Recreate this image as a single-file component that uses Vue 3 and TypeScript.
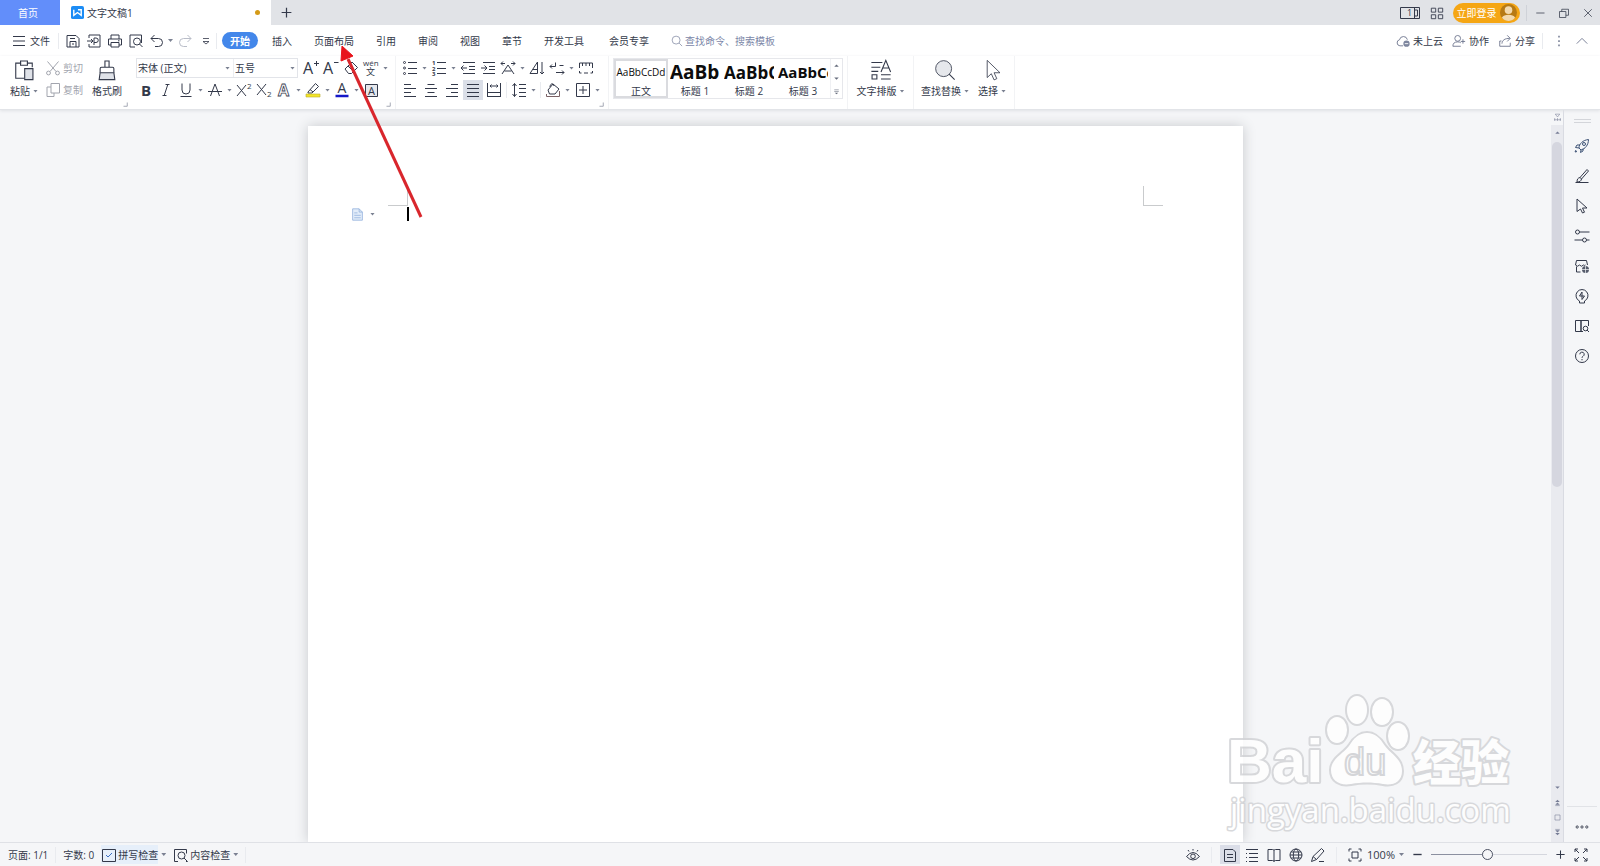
<script setup lang="ts">
import { h, ref } from 'vue'

interface Tool {
  icon: string
  label: string
  caret?: boolean
  active?: boolean
  sep?: boolean
}

const icons: Record<string, string> = {
  menu: '<path d="M2 3.500h12M2 8h12M2 12.500h12"/>',
  save: '<path d="M2 14V2.500H11L14 5.500V14H2zM5 14V8.500h6V14M5 5.500h5M7 11h2"/>',
  exportPdf: '<path d="M3 5V2h11v12H3v-3M1 8h6M5 6l2 2-2 2M8 12V5h2a2 2 0 0 1 0 4.500H8"/>',
  print: '<path d="M4 6V2h8v4M4 12H1.500V6h13v6H12M4 9.500h8V14H4zM11 7.800h1.500"/>',
  preview: '<path d="M7 14H2V2h11.500v8M13.500 2v3"/><circle cx="9" cy="8.500" r="3.500"/><path d="M11.500 11l3 3"/>',
  undo: '<path d="M5.500 2L2 5.500 5.500 9M2 5.500h7.500a4 4 0 0 1 0 8H6"/>',
  redo: '<path d="M10.500 2L14 5.500 10.500 9M14 5.500H6.500a4 4 0 0 0 0 8H10"/>',
  more: '<path d="M5 5.500h6M5 8.500h6L8 11z" stroke-width=".8"/>',
  search: '<circle cx="6.800" cy="6.800" r="5.300"/><path d="M10.800 10.800l4 4"/>',
  cloud: '<path d="M8 13.500H4.500A3.500 3.500 0 0 1 4 6.600 4.600 4.600 0 0 1 13 6.500"/><circle cx="12" cy="11" r="3.600" fill="#7d869e" stroke="none"/><path d="M10 11h4" stroke="#fff"/>',
  people: '<circle cx="6.500" cy="5" r="3.300"/><path d="M1 14c0-3.500 2-5 5.500-5 1.500 0 2.500.2 3.500 1M1 14h9M12.500 6v5M10 8.500h5"/>',
  share: '<path d="M4 8H2v6h12v-4M4.500 11C5 7 7.500 5 13.500 5M10.500 1.500L14 5l-3.500 3.500"/>',
  dots: '<path d="M8 2v2M8 7v2M8 12v2" stroke-width="1.600"/>',
  up: '<path d="M2 11l6-6 6 6"/>',
  tile: '<path d="M1.500 2.500h5v4.500h-5zM9.500 2.500h5v4.500h-5zM1.500 10h5v4.500h-5zM9.500 10h5v4.500h-5z"/>',
  min: '<path d="M3 8h11"/>',
  restore: '<path d="M2 6h8.500v8H2zM5 6V3h9v8h-3.500"/>',
  close: '<path d="M3 3l10 10M13 3L3 13"/>',
  plus: '<path d="M8 2v12M2 8h12" stroke-width="1.500"/>',
  minus: '<path d="M2 8h12" stroke-width="2"/>',
  paste: '<path d="M6 3H2v11h6M10 3h4v3M5.500 1.500h5v3h-5z" stroke-width=".8"/><path d="M8.500 7h6v8h-6z" fill="#dfe2e8" stroke-width=".8"/>',
  cut: '<path d="M2.500 1.500l8.500 10M13.500 1.500L5 11.500"/><circle cx="3.500" cy="13" r="1.900"/><circle cx="12.500" cy="13" r="1.900"/>',
  copy: '<path d="M6 1.500h8.500V11H6zM6 5H2v9.500h7V11"/>',
  brush: '<path d="M6.500 6V1.500h3V6M3 10V7q0-1 1-1h8q1 0 1 1v3" stroke-width=".8"/><path d="M3 10h10l.7 5H2.300z" fill="#dfe2e8" stroke-width=".8"/>',
  grow: '<text x="0" y="14" font-size="16">A</text><path d="M11 3.500h5M13.500 1v5"/>',
  shrink: '<text x="0" y="14" font-size="16">A</text><path d="M11 2.500h4.500"/>',
  eraser: '<path d="M2 9l7-7 5.500 5.500L8.500 13.500h-3zM5 6l5.500 5.500"/>',
  pinyin: '<text x="0" y="6" font-size="8">wén</text><text x="3" y="15" font-size="9">文</text>',
  bold: '<text x="3" y="13.500" font-size="15" font-weight="700">B</text>',
  italic: '<path d="M7.500 2.500h4M4.500 13.500h4M9.800 2.500l-3.600 11"/>',
  underline: '<path d="M4 1.500v6.500a4 4 0 0 0 8 0V1.500M2.500 14.500h11"/>',
  strike: '<path d="M3.500 14L8 2l4.500 12M1 9.500h14"/>',
  sup: '<path d="M1 3l9 11M10 3L1 14"/><text x="11" y="7" font-size="8">2</text>',
  sub: '<path d="M1 2l9 11M10 2L1 13"/><text x="11" y="15" font-size="8">2</text>',
  effect: '<text x="2" y="14" font-size="16" font-weight="700" fill="#fff" stroke="#3f4556" stroke-width=".8">A</text>',
  marker: '<path d="M3 10l7.500-8.500 3 3L7 11H3zM5 7.500L8 10"/><path d="M1 12h14v3H1z" fill="#f4e52a" stroke="#b9ad2c" stroke-width=".6"/>',
  color: '<text x="3.500" y="11" font-size="14">A</text><path d="M1.500 14h13" stroke="#1618c8" stroke-width="2.500"/>',
  shade: '<path d="M2.500 2.500h12v12h-12z" fill="#e6e8ed"/><text x="5" y="12.500" font-size="11">A</text>',
  bullets: '<circle cx="2.500" cy="2.500" r="1"/><circle cx="2.500" cy="8" r="1"/><circle cx="2.500" cy="13.500" r="1"/><path d="M6 2.500h9M6 8.500h9M6 13.500h9"/>',
  numbers: '<text x="1" y="5" font-size="6" font-weight="700">1</text><text x="1" y="10.500" font-size="6" font-weight="700">2</text><text x="1" y="16" font-size="6" font-weight="700">3</text><path d="M6 2.500h9M6 8.500h9M6 13.500h9"/>',
  outdent: '<path d="M3 2.500h12M9 6.500h6M9 9.500h6M3 13.500h12M1 8h6M3.500 5.500L1 8l2.500 2.500"/>',
  indent: '<path d="M3 2.500h12M9 6.500h6M9 9.500h6M3 13.500h12M1 8h6M4.500 5.500L7 8l-2.500 2.500"/>',
  scale: '<path d="M1 3.500h4M3 1.500L1 3.500l2 2M15 3.500h-4M13 1.500l2 2-2 2M2 14l6-9 6 9M4.500 11h7"/>',
  sort: '<path d="M1 13.500L8.500 2v11.500zM4 9.500h4.500M13 2v12M11 12l2 2 2-2"/>',
  wrap: '<path d="M6.500 2.500v4H1M3 4.500l-2 2 2 2M7 12.500h8M13 10.500l2 2-2 2M14.500 5.500h-4"/>',
  ruler: '<path d="M1.500 8V3h13v5M4.500 3v3M8 3v3M11.500 3v3M1.500 11v2h2M6 13h4M12.500 13h2v-2"/>',
  left: '<path d="M2 2.500h7M2 6.500h12M2 10.500h7M2 14.500h12"/>',
  center: '<path d="M4.500 2.500h7M2 6.500h12M4.500 10.500h7M2 14.500h12"/>',
  right: '<path d="M7 2.500h7M2 6.500h12M7 10.500h7M2 14.500h12"/>',
  justify: '<path d="M2 2.500h12M2 6.500h12M2 10.500h12M2 14.500h12"/>',
  distribute: '<path d="M1.500 1v14M14.500 1v14M4 4h8M5.500 2.500L4 4l1.500 1.500M10.500 2.500L12 4l-1.500 1.500M1.500 10.500h13M1.500 14.500h13"/>',
  spacing: '<path d="M3.500 1.500v13M1.500 4l2-2.500 2 2.500M1.500 12l2 2.500 2-2.500M8 2.500h7M8 6.500h7M8 10.500h7M8 14.500h7"/>',
  fill: '<path d="M3 8l5-6 6 5-4 5H4.500zM5 5c0-3 3-5 4-1"/><path d="M1.500 12v2.500h13V9" stroke="#7b6266"/>',
  border: '<path d="M1.500 1.500h13v13h-13zM8 4v8M4 8h8" />',
  typeset: '<path d="M1 2.500h8M1 6h6.500M1 9h5M1.500 11.500h3.500v3H1.500zM8 11.500h7M8 14.500h7" stroke-width=".8"/><path d="M8 9.500L11.500 1 15 9.500M9.500 6.500h4" stroke-width=".8"/>',
  find: '<circle cx="7" cy="7" r="5.800" fill="#e6e8ec" stroke-width=".6"/><path d="M11 11l4 4" stroke-width=".8"/>',
  select: '<path d="M4.500 1v12.500l3-2.800 2 4.500 2-.9-2-4.300h4.300z" stroke-width=".6"/>',
  launcher: '<path d="M14 4v10H4"/>',
  rocket: '<path d="M5 10c0-4 4-8 9.500-8.500C14.500 7 11 11 7 12zM6 7H3L1.500 9.500 5 10M9 10.500V13l-2.500 1.500L7 12M2 12l-1 2 2-.5" stroke="#3d5275"/><circle cx="10" cy="6" r="1.500" stroke="#3d5275"/>',
  pen: '<path d="M1.500 14.500h13M3 14c0-3 1-4 3-4.500l7-8 1.500 1.500-7 8C7 13 6 14 3 14zM6 9.500l1.800 1.700"/>',
  cursor: '<path d="M3 1v12.500l3.500-2.500 2 4 2-.8-2-4.200H13z"/>',
  sliders: '<circle cx="3.500" cy="4" r="2"/><path d="M5.500 4H15.500M.500 12h8M12.500 12h3"/><circle cx="10.500" cy="12" r="2"/>',
  shop: '<path d="M1.500 7L2.500 2.500h10l1 4.500M1.500 7q2 2.500 4 0 2 2.500 4 0 1 .8 2 0M2.500 8.500v5.500h4"/><circle cx="11.500" cy="11.500" r="3.500" fill="#565c6c" stroke="none"/><path d="M11.500 8v7M8 11.500h7" stroke="#f5f6f8" stroke-width=".7"/>',
  bulb: '<path d="M5.500 13v2h5v-2a6 6 0 1 0-5 0zM8 4L5.500 8H8v3.500L10.500 8H8z"/>',
  book: '<path d="M7 13.500H1.500v-11H7zM7 13.500V2.500H14.500V8M7 13.500h2"/><circle cx="11.500" cy="10.500" r="2.300"/><path d="M13 12l2 2"/>',
  help: '<circle cx="8" cy="8" r="6.500"/><path d="M5.800 6.300a2.200 2.200 0 1 1 3.200 2q-1 .5-1 1.500M8 11v1.300"/>',
  ellipsis: '<circle cx="2.500" cy="8" r="1.300"/><circle cx="8" cy="8" r="1.300"/><circle cx="13.500" cy="8" r="1.300"/>',
  spell: '<path d="M1.500 2.500h13v12h-13z"/><path d="M5 8l2 2 4-4" stroke="#3d6fc4"/>',
  content: '<path d="M5 14.500H1.500v-12h12v4M13 14.500h1.500"/><circle cx="8.500" cy="8.500" r="3.500"/><path d="M11 11l3.500 3.500"/>',
  eye: '<path d="M1.500 9.500Q8 1.500 14.500 9.500 8 16.500 1.500 9.500zM8 3.500V2M4 4.500L3 3M12 4.500L13 3"/><circle cx="8" cy="9.300" r="2.300"/>',
  page: '<path d="M2.500 2.500h8.500L13.500 5v9.500h-11zM5 7.500h6M5 10.500h6"/>',
  outline: '<path d="M2 2.500h12M5 6.500h9M2 6.500h1M2 10.500h1M5 10.500h9M5 14.500h9M2 14.500h1"/>',
  read: '<path d="M8 3.500V14.500M8 3.500Q8 2.500 6.500 2.500H2v11H6.500Q8 13.500 8 14.500 8 13.500 9.500 13.500H14v-11H9.500Q8 2.500 8 3.500z"/>',
  globe: '<circle cx="8" cy="8" r="6"/><ellipse cx="8" cy="8" rx="2.700" ry="6"/><path d="M2 8h12M3 5h10M3 11h10"/>',
  write: '<path d="M1.500 14.500l1.500-5L11.500 1.500 14 4 6.500 12.500zM9 14.500h5M3 9.500l3.500 3"/>',
  fit: '<path d="M2 4.500v-2.500h2.500M11.500 2H14v2.500M14 11.500V14h-2.500M4.500 14H2v-2.500M5 5h6v6H5z"/>',
  full: '<path d="M2 5V2h3M2 2l4 4M11 2h3v3M14 2l-4 4M14 11v3h-3M14 14l-4-4M5 14H2v-3M2 14l4-4"/>',
  doc: '<path d="M2 1h8l4 4v10H2z" fill="#e2ecf9"/><path d="M10 1v4h4M4 6h4M4 9h8M4 12h8"/>',
  arrowUp: '<path d="M4 10l4-4 4 4z" fill="currentColor" stroke="none"/>',
  arrowDown: '<path d="M4 6l4 4 4-4z" fill="currentColor" stroke="none"/>',
  prev: '<path d="M4 7l4-4 4 4zM4 12l4-4 4 4z" fill="currentColor" stroke="none"/><path d="M4 13.500h8"/>',
  next: '<path d="M4 4l4 4 4-4zM4 9l4 4 4-4z" fill="currentColor" stroke="none"/><path d="M4 2.500h8"/>',
  box: '<path d="M3.500 3.500h9v9h-9z"/>',
  rulerToggle: '<path d="M4 2h8L8 7zM2 12h12M3 9v5M8 9v5M13 9v5"/>',
  styleMore: '<path d="M4 5h8M4 8h8"/><path d="M5 10l3 3 3-3z" fill="currentColor" stroke="none"/>',
}

const Icon = (props: { name: string }) =>
  h('svg', { class: 'icon', viewBox: '0 0 16 16', 'aria-hidden': 'true', innerHTML: icons[props.name] })
Icon.props = ['name']

const quick: Tool[] = [
  { icon: 'save', label: '保存' },
  { icon: 'exportPdf', label: '输出为PDF' },
  { icon: 'print', label: '打印' },
  { icon: 'preview', label: '打印预览' },
  { icon: 'undo', label: '撤销', caret: true },
]
const tabs = ['开始', '插入', '页面布局', '引用', '审阅', '视图', '章节', '开发工具', '会员专享']
const activeTab = ref('开始')

const fontTop: Tool[] = [
  { icon: 'grow', label: '增大字号' },
  { icon: 'shrink', label: '减小字号' },
  { icon: 'eraser', label: '清除格式' },
  { icon: 'pinyin', label: '拼音指南', caret: true },
]
const fontBottom: Tool[] = [
  { icon: 'bold', label: '加粗' },
  { icon: 'italic', label: '倾斜' },
  { icon: 'underline', label: '下划线', caret: true },
  { icon: 'strike', label: '删除线', caret: true },
  { icon: 'sup', label: '上标' },
  { icon: 'sub', label: '下标' },
  { icon: 'effect', label: '文字效果', caret: true },
  { icon: 'marker', label: '突出显示', caret: true },
  { icon: 'color', label: '字体颜色', caret: true },
  { icon: 'shade', label: '字符底纹' },
]
const paraTop: Tool[] = [
  { icon: 'bullets', label: '项目符号', caret: true },
  { icon: 'numbers', label: '编号', caret: true },
  { icon: 'outdent', label: '减少缩进量' },
  { icon: 'indent', label: '增加缩进量' },
  { icon: 'scale', label: '中文版式', caret: true },
  { icon: 'sort', label: '排序' },
  { icon: 'wrap', label: '显示编辑标记', caret: true },
  { icon: 'ruler', label: '制表位' },
]
const paraBottom: Tool[] = [
  { icon: 'left', label: '左对齐' },
  { icon: 'center', label: '居中对齐' },
  { icon: 'right', label: '右对齐' },
  { icon: 'justify', label: '两端对齐', active: true },
  { icon: 'distribute', label: '分散对齐' },
  { icon: 'spacing', label: '行距', caret: true, sep: true },
  { icon: 'fill', label: '底纹颜色', caret: true, sep: true },
  { icon: 'border', label: '边框', caret: true },
]
const styles = [
  { sample: 'AaBbCcDd', name: '正文', kind: 'body' },
  { sample: 'AaBb', name: '标题 1', kind: 'h1' },
  { sample: 'AaBbC', name: '标题 2', kind: 'h2' },
  { sample: 'AaBbCc', name: '标题 3', kind: 'h3' },
]
const sideTools: Tool[] = [
  { icon: 'rocket', label: '快速工具' },
  { icon: 'pen', label: '样式' },
  { icon: 'cursor', label: '选择' },
  { icon: 'sliders', label: '属性' },
  { icon: 'shop', label: '素材' },
  { icon: 'bulb', label: '推荐' },
  { icon: 'book', label: '查阅' },
  { icon: 'help', label: '帮助' },
]
const views: Tool[] = [
  { icon: 'page', label: '页面视图', active: true },
  { icon: 'outline', label: '大纲' },
  { icon: 'read', label: '阅读版式' },
  { icon: 'globe', label: 'Web版式' },
  { icon: 'write', label: '写作模式' },
]
const zoom = ref(49)
</script>

<template>
  <div class="app">
    <header class="titlebar">
      <button class="home-tab">首页</button>
      <button class="doc-tab">
        <svg class="logo" viewBox="0 0 14 14" aria-hidden="true">
          <rect width="14" height="14" rx="2" fill="#1c8cf5" />
          <path d="M3 4v6l4-3 4 3V4H7.500" fill="none" stroke="#fff" stroke-width="1.500" />
        </svg>
        <span>文字文稿1</span>
        <i class="unsaved"></i>
      </button>
      <button class="new-tab" aria-label="新建"><Icon name="plus" /></button>
      <div class="window-tools">
        <button class="split" aria-label="窗口布局">
          <svg viewBox="0 0 20 12" aria-hidden="true">
            <path d="M.500 .500h19v11H.500zM14.500 .500v11M14.500 3h3v6h-3" fill="none" stroke="currentColor" />
            <text x="7" y="9" font-size="9" fill="currentColor">1</text>
          </svg>
        </button>
        <button class="tile" aria-label="应用"><Icon name="tile" /></button>
        <button class="login">
          <span>立即登录</span>
          <svg viewBox="0 0 18 18" aria-hidden="true">
            <circle cx="9" cy="9" r="9" fill="#b77a14" />
            <circle cx="9" cy="6.500" r="4" fill="#f3d9ac" />
            <path d="M2 14.500Q4 11.500 9 11.500t7 3Q13 18 9 18t-7-3.500z" fill="#f3d9ac" />
          </svg>
        </button>
        <i class="bar"></i>
        <button aria-label="最小化"><Icon name="min" /></button>
        <button aria-label="还原"><Icon name="restore" /></button>
        <button aria-label="关闭"><Icon name="close" /></button>
      </div>
    </header>

    <nav class="menubar">
      <button class="file"><Icon name="menu" />文件</button>
      <i class="bar"></i>
      <div class="quick">
        <button v-for="t in quick" :key="t.icon" class="tool" :aria-label="t.label">
          <span class="cell"><Icon :name="t.icon" /></span><i v-if="t.caret" class="caret"></i>
        </button>
        <button class="tool faded" aria-label="恢复"><span class="cell"><Icon name="redo" /></span></button>
        <button class="tool" aria-label="自定义"><span class="cell"><Icon name="more" /></span></button>
      </div>
      <i class="bar"></i>
      <div class="tabs">
        <button
          v-for="t in tabs"
          :key="t"
          :class="['tab', { on: t === activeTab }]"
          @click="activeTab = t"
        >{{ t }}</button>
      </div>
      <label class="search">
        <Icon name="search" />
        <input type="text" placeholder="查找命令、搜索模板" aria-label="查找命令、搜索模板" />
      </label>
      <div class="account">
        <button><Icon name="cloud" />未上云</button>
        <button><Icon name="people" />协作</button>
        <button><Icon name="share" />分享</button>
        <i class="bar"></i>
        <button aria-label="更多"><Icon name="dots" /></button>
        <button aria-label="收起功能区"><Icon name="up" /></button>
      </div>
    </nav>

    <section class="ribbon">
      <div class="group clip">
        <button class="big"><Icon name="paste" /><span>粘贴<i class="caret"></i></span></button>
        <div class="rows">
          <button class="small"><Icon name="cut" />剪切</button>
          <button class="small"><Icon name="copy" />复制</button>
        </div>
        <button class="big"><Icon name="brush" /><span>格式刷</span></button>
        <button class="launch" aria-label="剪贴板"><Icon name="launcher" /></button>
      </div>

      <div class="group font">
        <div class="rows">
          <div class="row">
            <div class="pickers">
              <span class="picker family">
                <select aria-label="字体"><option>宋体 (正文)</option></select><i class="caret"></i>
              </span>
              <span class="picker size">
                <select aria-label="字号"><option>五号</option></select><i class="caret"></i>
              </span>
            </div>
            <button v-for="t in fontTop" :key="t.icon" class="tool" :aria-label="t.label">
              <span class="cell"><Icon :name="t.icon" /></span><i v-if="t.caret" class="caret"></i>
            </button>
          </div>
          <div class="row">
            <button v-for="t in fontBottom" :key="t.icon" class="tool" :aria-label="t.label">
              <span class="cell"><Icon :name="t.icon" /></span><i v-if="t.caret" class="caret"></i>
            </button>
          </div>
        </div>
        <button class="launch" aria-label="字体设置"><Icon name="launcher" /></button>
      </div>

      <div class="group para">
        <div class="rows">
          <div class="row">
            <button v-for="t in paraTop" :key="t.icon" class="tool" :aria-label="t.label">
              <span class="cell"><Icon :name="t.icon" /></span><i v-if="t.caret" class="caret"></i>
            </button>
          </div>
          <div class="row">
            <template v-for="t in paraBottom" :key="t.icon">
              <i v-if="t.sep" class="bar"></i>
              <button :class="['tool', { active: t.active }]" :aria-label="t.label">
                <span class="cell"><Icon :name="t.icon" /></span><i v-if="t.caret" class="caret"></i>
              </button>
            </template>
          </div>
        </div>
        <button class="launch" aria-label="段落设置"><Icon name="launcher" /></button>
      </div>

      <div class="group">
        <div class="gallery">
          <button v-for="s in styles" :key="s.name" :class="['style', s.kind]">
            <span class="sample">{{ s.sample }}</span>
            <span class="name">{{ s.name }}</span>
          </button>
          <div class="scroller">
            <button aria-label="上一行"><Icon name="arrowUp" /></button>
            <button aria-label="下一行"><Icon name="arrowDown" /></button>
            <button aria-label="更多样式"><Icon name="styleMore" /></button>
          </div>
        </div>
      </div>

      <div class="group layout">
        <button class="big"><Icon name="typeset" /><span>文字排版<i class="caret"></i></span></button>
      </div>
      <div class="group edit">
        <button class="big"><Icon name="find" /><span>查找替换<i class="caret"></i></span></button>
        <button class="big"><Icon name="select" /><span>选择<i class="caret"></i></span></button>
      </div>
    </section>

    <main class="work">
      <div class="canvas">
        <article class="page">
          <div class="marks"><i class="mark start"></i><i class="mark end"></i></div>
          <div class="line">
            <button class="paper" aria-label="页面选项"><Icon name="doc" /><i class="caret"></i></button>
            <span class="cursor"></span>
          </div>
        </article>
      </div>
      <div class="scrollbar">
        <button class="ruler-toggle" aria-label="标尺"><Icon name="rulerToggle" /></button>
        <button aria-label="向上滚动"><Icon name="arrowUp" /></button>
        <div class="track"><div class="thumb"></div></div>
        <button aria-label="向下滚动"><Icon name="arrowDown" /></button>
        <button aria-label="上一页"><Icon name="prev" /></button>
        <button aria-label="选择浏览对象"><Icon name="box" /></button>
        <button aria-label="下一页"><Icon name="next" /></button>
      </div>
      <aside class="side">
        <i class="grip"></i>
        <button v-for="t in sideTools" :key="t.icon" :aria-label="t.label"><Icon :name="t.icon" /></button>
        <button class="last" aria-label="更多工具"><Icon name="ellipsis" /></button>
      </aside>

      <svg class="watermark" viewBox="0 0 300 146" aria-hidden="true">
        <g fill="#fff" stroke="#d2d3d6" stroke-width="4" paint-order="stroke" stroke-linejoin="round">
          <text x="3" y="89" font-size="62" font-weight="700" class="brand">Bai</text>
          <ellipse cx="113" cy="37" rx="10" ry="13" />
          <ellipse cx="133" cy="17" rx="10" ry="14" />
          <ellipse cx="158" cy="19" rx="10" ry="13" />
          <ellipse cx="174" cy="43" rx="10" ry="13" />
          <path d="M143 40C151 40 156 45 161 53 167 61 178 66 178 78 178 89 169 93 159 91 148 89 138 89 127 91 116 93 107 88 107 77 107 66 119 61 125 53 130 45 135 40 143 40z" />
          <text x="189" y="87" font-size="48" font-weight="900" class="cn">经验</text>
          <text x="6" y="129" font-size="33" class="url" stroke-width="3">jingyan.baidu.com</text>
        </g>
        <text x="120" y="82" font-size="38" class="brand" fill="#fff" stroke="#cfd0d3" stroke-width="2">du</text>
      </svg>
    </main>

    <footer class="status">
      <span class="count">页面: 1/1</span>
      <i class="bar"></i>
      <span class="count">字数: 0</span>
      <button class="check on"><Icon name="spell" />拼写检查</button><i class="caret"></i>
      <button class="check"><Icon name="content" />内容检查</button><i class="caret"></i>
      <i class="bar"></i>
      <div class="view-tools">
        <button class="view" aria-label="护眼模式"><Icon name="eye" /></button>
        <i class="bar wide"></i>
        <button v-for="t in views" :key="t.icon" :class="['view', { active: t.active }]" :aria-label="t.label">
          <Icon :name="t.icon" />
        </button>
        <i class="bar wide"></i>
        <button class="view" aria-label="最佳显示比例"><Icon name="fit" /></button>
        <button class="percent">100%<i class="caret"></i></button>
        <button class="step" aria-label="缩小"><Icon name="minus" /></button>
        <input v-model="zoom" class="zoom" type="range" min="0" max="100" aria-label="显示比例" />
        <button class="step" aria-label="放大"><Icon name="plus" /></button>
        <button class="view" aria-label="全屏"><Icon name="full" /></button>
      </div>
    </footer>

    <svg class="pointer" viewBox="0 0 90 180" aria-hidden="true">
      <path d="M86 173L13 15" stroke="#d9262c" stroke-width="3" />
      <path d="M7 2L6 17 18 12z" fill="#e8141c" stroke="#e8141c" />
    </svg>
  </div>
</template>

<style>
body {
  margin: 0;
}
</style>

<style scoped>
.app {
  position: relative;
  display: flex;
  flex-direction: column;
  height: 100vh;
  overflow: hidden;
  background: #f5f6f8;
  color: #33394a;
  font: 10px/16px "Open Sans", "Noto Sans CJK SC", sans-serif;
}
.app *,
.app *::before {
  box-sizing: border-box;
}
button,
input,
select {
  margin: 0;
  padding: 0;
  border: 0;
  background: none;
  color: inherit;
  font: inherit;
  white-space: nowrap;
}
button {
  display: flex;
  align-items: center;
  justify-content: center;
  flex: none;
}
.icon {
  display: block;
  flex: none;
  width: 16px;
  height: 16px;
  fill: none;
  stroke: currentColor;
  overflow: visible;
}
.icon :deep(text:not([stroke])) {
  fill: currentColor;
  stroke: none;
}
.caret {
  flex: none;
  width: 5px;
  height: 3px;
  background: #7b8192;
  clip-path: polygon(0 0, 100% 0, 50% 100%);
}
.bar {
  flex: none;
  width: 1px;
  height: 16px;
  background: #e9ebef;
}

/* Title bar */
.titlebar {
  display: flex;
  flex: none;
  height: 25px;
  background: #e1e3e7;
}
.home-tab {
  width: 60px;
  padding-right: 4px;
  background: #628efa;
  color: #fff;
}
.doc-tab {
  width: 211px;
  padding: 0 11px 0 11px;
  gap: 3px;
  background: #fff;
}
.logo {
  width: 13px;
  height: 13px;
}
.unsaved {
  width: 5px;
  height: 5px;
  margin-left: auto;
  border-radius: 50%;
  background: #d49a17;
}
.new-tab {
  width: 30px;
}
.new-tab .icon {
  width: 13px;
  height: 13px;
}
.window-tools {
  display: flex;
  align-items: center;
  margin-left: auto;
}
.window-tools button {
  width: 24px;
}
.window-tools .icon {
  width: 12px;
  height: 12px;
}
.window-tools .split {
  width: 20px;
}
.split svg {
  width: 20px;
  height: 12px;
}
.window-tools .tile {
  width: 33px;
}
.tile .icon {
  width: 14px;
  height: 14px;
}
.window-tools .login {
  width: 67px;
  height: 20px;
  gap: 3px;
  border-radius: 10px;
  background: #f5a614;
  color: #fff;
}
.login svg {
  width: 17px;
  height: 17px;
}
.window-tools .bar {
  margin: 0 1px 0 6px;
  background: #cfd2d8;
}

/* Menu bar */
.menubar {
  display: flex;
  align-items: center;
  flex: none;
  height: 31px;
  padding: 0 11px 0 11px;
  background: #fff;
}
.file {
  gap: 3px;
  margin-right: 8px;
}
.quick {
  display: flex;
  gap: 1px;
  margin: 0 0 0 4px;
}
.quick .faded {
  color: #b9bdc8;
}
.quick .tool .caret {
  margin: 0 1px;
}
.tabs {
  display: flex;
  margin-left: 5px;
}
.tab {
  padding: 0 11px;
  height: 17px;
}
.tab.on {
  margin-right: 3px;
  padding: 0 8px;
  border-radius: 9px;
  background: #4387ea;
  color: #fff;
  font-weight: 700;
}
.tab:last-child {
  margin-left: 3px;
}
.search {
  display: flex;
  align-items: center;
  gap: 2px;
  margin-left: 11px;
  color: #8189a3;
}
.search .icon {
  width: 12px;
  height: 12px;
}
.search input {
  width: 110px;
  outline: 0;
}
.search input::placeholder {
  color: #7c87a8;
  opacity: 1;
}
.account {
  display: flex;
  align-items: center;
  gap: 9px;
  margin-left: auto;
}
.account button {
  gap: 3px;
}
.account .icon {
  width: 14px;
  height: 14px;
  color: #69718a;
}
.account .bar {
  margin-left: -2px;
}

/* Ribbon */
.ribbon {
  display: flex;
  flex: none;
  height: 54px;
  border-bottom: 1px solid #e2e4e8;
  background: #fff;
  box-shadow: 0 1px 3px #dfe1e5;
  z-index: 1;
}
.group {
  position: relative;
  display: flex;
  align-items: flex-start;
  padding: 2px 4px 0;
  border-right: 1px solid #f2f3f5;
}
.group.clip {
  width: 132px;
  padding: 2px 0 0 5px;
  border: 0;
}
.group.font {
  width: 264px;
}
.group.para {
  width: 213px;
}
.group.layout {
  width: 66px;
  padding: 2px 0 0;
  justify-content: center;
}
.group.edit {
  width: 101px;
  padding: 2px 0 0 3px;
}
.launch {
  position: absolute;
  right: 4px;
  bottom: 2px;
}
.launch .icon {
  width: 6px;
  height: 6px;
  color: #888e9c;
  stroke-width: 2;
}
.rows {
  display: flex;
  flex-direction: column;
  gap: 2px;
}
.row {
  display: flex;
  align-items: center;
  height: 20px;
}
.tool {
  height: 20px;
}
.para .row:last-child {
  gap: 1px;
}
.para .row .bar {
  margin: 0 1px;
}
.cell {
  display: flex;
  justify-content: center;
  width: 20px;
}
.tool .caret {
  margin: 0 2px;
}
.tool.active {
  background: #dbdfe8;
}
.big {
  flex-direction: column;
  min-width: 36px;
}
.big .icon {
  width: 22px;
  height: 22px;
  margin: 1px 0 2px;
}
.big span {
  display: flex;
  align-items: center;
  gap: 3px;
}
.group.clip .big:first-child {
  width: 38px;
}
.small {
  gap: 2px;
  width: 42px;
  height: 20px;
  color: #a2a5ae;
}
.group.clip .rows {
  margin-right: 4px;
}
.edit .big:first-child {
  width: 56px;
}
.edit .big:last-child {
  margin-left: 1px;
}
.pickers {
  display: flex;
  width: 162px;
  height: 20px;
  margin-right: 3px;
  border: 1px solid #e2e4e9;
}
.picker {
  display: flex;
  align-items: center;
  padding-right: 3px;
}
.picker.family {
  width: 96px;
}
.picker.size {
  flex: 1;
  padding-right: 2px;
  border-left: 1px solid #eceef1;
}
.picker select {
  flex: 1;
  min-width: 0;
  padding-left: 1px;
  appearance: none;
}
.gallery {
  display: flex;
  height: 41px;
  border: 1px solid #e6e7eb;
}
.style {
  flex-direction: column;
  justify-content: flex-start;
  width: 54px;
  padding: 0 2px;
  overflow: hidden;
}
.style.body {
  border: 2px solid #dadbdf;
  padding: 0;
}
.sample {
  flex: none;
  width: 100%;
  height: 24px;
  overflow: hidden;
  color: #0c0c0c;
  font-weight: 700;
  line-height: 27px;
  text-align: left;
}
.body .sample {
  height: 22px;
  font-weight: 400;
  line-height: 23px;
  text-align: center;
}
.h1 .sample {
  font-size: 19px;
}
.h2 .sample {
  font-size: 17px;
}
.h3 .sample {
  font-size: 15px;
}
.scroller {
  display: flex;
  flex-direction: column;
  justify-content: space-around;
  width: 12px;
  border-left: 1px solid #eff0f3;
  color: #666c7c;
}
.scroller .icon {
  width: 9px;
  height: 9px;
}

/* Workspace */
.work {
  position: relative;
  display: flex;
  flex: 1;
  min-height: 0;
}
.canvas {
  display: flex;
  flex: 1;
  justify-content: center;
  padding-top: 16px;
  overflow: hidden;
}
.page {
  width: 935px;
  padding-top: 60px;
  background: #fff;
  box-shadow: 0 0 12px #c6c8cc;
}
.marks {
  display: flex;
  justify-content: space-between;
  padding: 0 80px;
}
.mark {
  width: 20px;
  height: 20px;
  border: 0 solid #c9cbcd;
  border-bottom-width: 1px;
}
.mark.start {
  border-right-width: 1px;
}
.mark.end {
  border-left-width: 1px;
}
.line {
  display: flex;
  align-items: center;
  height: 16px;
  padding-left: 43px;
}
.paper {
  gap: 6px;
  width: 24px;
  margin-right: 32px;
  color: #94b2dc;
}
.paper .icon {
  width: 13px;
  height: 13px;
}
.cursor {
  width: 2px;
  height: 14px;
  background: #000;
}
.scrollbar {
  display: flex;
  flex-direction: column;
  align-items: center;
  width: 13px;
  padding-bottom: 2px;
  border-right: 1px solid #d9dbe2;
  background: #e9eaef;
  color: #777d96;
}
.scrollbar button {
  width: 100%;
  height: 15px;
}
.scrollbar .icon {
  width: 9px;
  height: 9px;
}
.ruler-toggle {
  background: #f5f6f8;
}
.track {
  display: flex;
  flex: 1;
  padding-top: 2px;
}
.thumb {
  width: 10px;
  height: 54%;
  border-radius: 5px;
  background: #d5d6df;
}
.side {
  display: flex;
  flex-direction: column;
  align-items: center;
  width: 36px;
}
.side button {
  width: 30px;
  height: 30px;
}
.grip {
  width: 17px;
  height: 4px;
  margin: 9px 0 8px;
  border: 1px solid #d3d5da;
  border-width: 1px 0;
}
.side .last {
  height: 36px;
  margin-top: auto;
  padding-top: 4px;
  border-top: 1px solid #e1e3e7;
}
.side .last .icon {
  width: 14px;
}
.watermark {
  position: absolute;
  right: 76px;
  bottom: 3px;
  width: 300px;
  height: 146px;
  opacity: 0.85;
  pointer-events: none;
}
.brand {
  font-family: "Liberation Sans", sans-serif;
}
.cn {
  font-family: "Noto Sans CJK SC", sans-serif;
}
.url {
  font-family: "Open Sans", sans-serif;
}

/* Status bar */
.status {
  display: flex;
  align-items: center;
  flex: none;
  height: 24px;
  padding: 0 9px 0 8px;
  border-top: 1px solid #dfe1e6;
}
.count {
  margin-right: 7px;
}
.status .bar {
  margin-right: 7px;
}
.check {
  gap: 1px;
  height: 19px;
}
.check.on {
  background: #e6effa;
}
.status > .caret {
  margin: 0 7px 0 3px;
}
.view-tools {
  display: flex;
  align-items: center;
  margin-left: auto;
}
.view {
  width: 20px;
  height: 19px;
  margin-right: 2px;
}
.view.active {
  background: #dbdee8;
}
.status .wide {
  margin: 0 8px 0 6px;
}
.percent {
  gap: 4px;
  margin-right: 8px;
  font-size: 11px;
}
.step .icon {
  width: 11px;
  height: 11px;
}
.zoom {
  width: 116px;
  height: 16px;
  margin: 0 8px;
  appearance: none;
  background: linear-gradient(90deg, #8b90a0 50%, #d5d7de 50%) center / 100% 1px no-repeat;
}
.zoom::-webkit-slider-thumb {
  appearance: none;
  width: 11px;
  height: 11px;
  border: 1px solid #4c5263;
  border-radius: 50%;
  background: #f5f6f8;
}
.status .view:last-child {
  margin: 0 0 0 5px;
}
.pointer {
  position: absolute;
  z-index: 2;
  left: 335px;
  top: 44px;
  width: 90px;
  height: 180px;
  pointer-events: none;
}
</style>
